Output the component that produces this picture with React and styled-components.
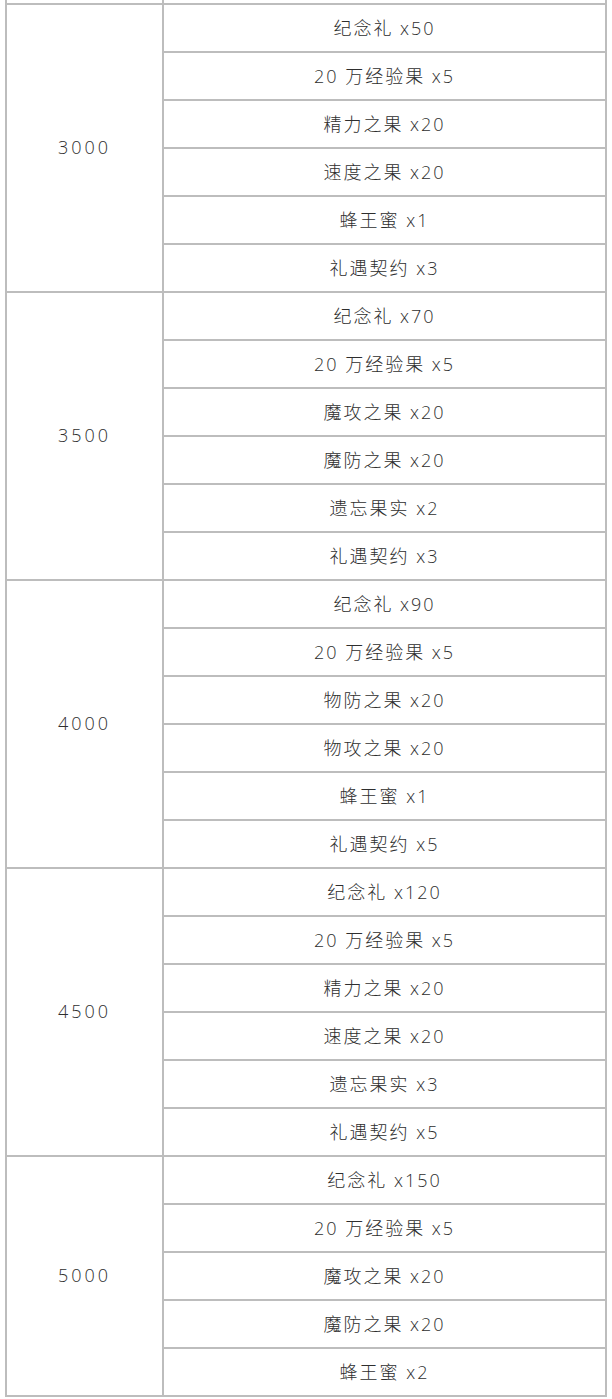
import React from "react";
import styled, { createGlobalStyle } from "styled-components";

const groups = [
  {
    points: "3000",
    rewards: ["纪念礼 x50", "20 万经验果 x5", "精力之果 x20", "速度之果 x20", "蜂王蜜 x1", "礼遇契约 x3"],
  },
  {
    points: "3500",
    rewards: ["纪念礼 x70", "20 万经验果 x5", "魔攻之果 x20", "魔防之果 x20", "遗忘果实 x2", "礼遇契约 x3"],
  },
  {
    points: "4000",
    rewards: ["纪念礼 x90", "20 万经验果 x5", "物防之果 x20", "物攻之果 x20", "蜂王蜜 x1", "礼遇契约 x5"],
  },
  {
    points: "4500",
    rewards: ["纪念礼 x120", "20 万经验果 x5", "精力之果 x20", "速度之果 x20", "遗忘果实 x3", "礼遇契约 x5"],
  },
  {
    points: "5000",
    rewards: ["纪念礼 x150", "20 万经验果 x5", "魔攻之果 x20", "魔防之果 x20", "蜂王蜜 x2"],
  },
];

const App = () => {
  return (
    <>
      <GlobalStyle />
      <Page>
        <Table>
          <colgroup>
            <PointsCol />
            <col />
          </colgroup>
          <tbody>
            {/* tail of the previous tier, cut off by the top of the page */}
            <TailRow>
              <Cell />
              <Cell />
            </TailRow>
            {groups.map((group) =>
              group.rewards.map((reward, i) => (
                <Row key={group.points + i}>
                  {i === 0 && (
                    <Cell rowSpan={group.rewards.length} $wide>
                      {group.points}
                    </Cell>
                  )}
                  <Cell>{reward}</Cell>
                </Row>
              ))
            )}
          </tbody>
        </Table>
      </Page>
    </>
  );
};

export default App;

const GlobalStyle = createGlobalStyle`
  body {
    margin: 0;
    background: #fff;
    font-family: "Open Sans", "Noto Sans CJK SC", sans-serif;
  }
`;

const Page = styled.div`
  padding: 0 5px;
  background: #fff;
`;

const Table = styled.table`
  width: 602px;
  border-collapse: collapse;
  table-layout: fixed;
  color: #2e2e2e;
  font-size: 18px;
  font-weight: 300;
  letter-spacing: 2px;
`;

const PointsCol = styled.col`
  width: 157px;
`;

const Row = styled.tr`
  height: 48px;
`;

const TailRow = styled.tr`
  height: 4px;
  td {
    border-top: 0;
    padding: 0;
  }
`;

const Cell = styled.td`
  border: 2px solid #bdbdbd;
  text-align: center;
  vertical-align: middle;
  padding: 0 0 2px;
  letter-spacing: ${({ $wide }) => ($wide ? "3px" : "2px")};
`;
